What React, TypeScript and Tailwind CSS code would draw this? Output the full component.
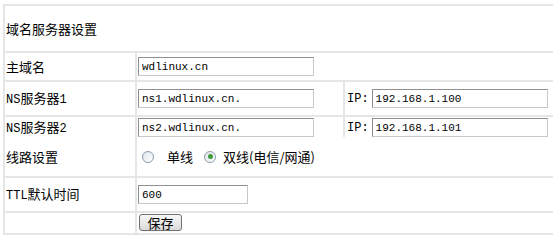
const cjk = { fontFamily: '"Noto Sans CJK SC", "Liberation Sans", sans-serif' };

function Field({ value, width }: { value: string; width: string }) {
  return (
    <input
      readOnly
      value={value}
      className={`${width} h-[19px] border border-t-[#8f8f8f] border-l-[#8f8f8f] border-r-[#c8c8c8] border-b-[#c8c8c8] bg-white px-[3px] font-['Liberation_Mono',monospace] text-[11px] text-black outline-none`}
    />
  );
}

function Ascii({ children }: { children: React.ReactNode }) {
  return <span className="font-['Liberation_Mono',monospace] text-[12px]">{children}</span>;
}

function Radio({ checked }: { checked?: boolean }) {
  return (
    <span className="flex h-[12px] w-[12px] items-center justify-center rounded-full border border-[#8c9cab] bg-gradient-to-br from-[#dfe5ea] to-white">
      {checked && <span className="h-[5px] w-[5px] rounded-full bg-[#3f9a3a]" />}
    </span>
  );
}

export default function App() {
  return (
    <div className="h-[240px] w-[553px] overflow-hidden bg-white text-[13px] text-black" style={cjk}>
      <div className="ml-[3px] mt-[4px] flex w-[570px] flex-col gap-[2px] bg-[#e6e6e6] p-[2px]">
        <div className="flex h-[45px] items-center bg-white pl-[1px]">域名服务器设置</div>

        <div className="grid h-[27px] grid-cols-[130px_1fr] gap-[2px]">
          <div className="flex items-center bg-white pl-[1px]">主域名</div>
          <div className="flex items-center bg-white pl-[1px]">
            <Field value="wdlinux.cn" width="w-[176px]" />
          </div>
        </div>

        <div className="grid h-[33px] grid-cols-[130px_206px_1fr] gap-[2px]">
          <div className="flex items-center bg-white pl-[1px]">
            <span>
              <Ascii>NS</Ascii>服务器<Ascii>1</Ascii>
            </span>
          </div>
          <div className="flex items-center bg-white pl-[1px]">
            <Field value="ns1.wdlinux.cn." width="w-[176px]" />
          </div>
          <div className="flex items-center gap-[3px] bg-white pl-[2px]">
            <Ascii>IP:</Ascii>
            <Field value="192.168.1.100" width="w-[176px]" />
          </div>
        </div>

        <div className="grid h-[18px] grid-cols-[130px_206px_1fr] gap-[2px]">
          <div className="flex items-center bg-white pl-[1px]">
            <span>
              <Ascii>NS</Ascii>服务器<Ascii>2</Ascii>
            </span>
          </div>
          <div className="flex items-center bg-white pl-[1px]">
            <Field value="ns2.wdlinux.cn." width="w-[176px]" />
          </div>
          <div className="flex items-center gap-[3px] bg-white pl-[2px]">
            <Ascii>IP:</Ascii>
            <Field value="192.168.1.101" width="w-[176px]" />
          </div>
        </div>

        <div className="grid h-[39px] grid-cols-[130px_1fr] gap-[2px]">
          <div className="flex items-center bg-white pl-[1px]">线路设置</div>
          <div className="flex items-center bg-white pl-[5px]">
            <Radio />
            <span className="ml-[13px]">单线</span>
            <span className="ml-[11px]">
              <Radio checked />
            </span>
            <span className="ml-[7px]">双线(电信/网通)</span>
          </div>
        </div>

        <div className="grid h-[33px] grid-cols-[130px_1fr] gap-[2px]">
          <div className="flex items-center bg-white pl-[1px]">
            <span>
              <Ascii>TTL</Ascii>默认时间
            </span>
          </div>
          <div className="flex items-center bg-white pl-[1px]">
            <Field value="600" width="w-[110px]" />
          </div>
        </div>

        <div className="grid h-[20px] grid-cols-[130px_1fr] gap-[2px]">
          <div className="bg-white" />
          <div className="flex items-start bg-white pl-[2px] pt-[1px]">
            <button className="flex h-[17px] w-[43px] items-center justify-center rounded-[3px] border border-[#707070] bg-gradient-to-b from-[#f8f8f8] to-[#dadada] text-[13px] leading-none">
              保存
            </button>
          </div>
        </div>
      </div>
    </div>
  );
}
